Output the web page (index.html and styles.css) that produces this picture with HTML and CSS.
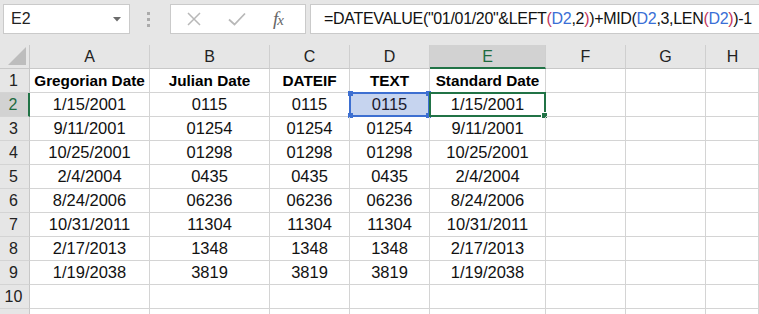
FILE: index.html
```html
<!DOCTYPE html>
<html>
<head>
<meta charset="utf-8">
<link rel="stylesheet" href="styles.css">
</head>
<body>
<div class="app">
  <div class="toolbar">
    <div class="namebox">
      <span class="name">E2</span>
      <svg class="caret" width="8" height="5" viewBox="0 0 8 5"><path d="M0 0h8L4 4.5z" fill="#6b6b6b"/></svg>
    </div>
    <div class="grip"><i></i><i></i><i></i></div>
    <div class="fxbox">
      <svg class="ico" width="16" height="16" viewBox="0 0 16 16"><path d="M2 2l12 12M14 2L2 14" stroke="#b8b8b8" stroke-width="1.5" fill="none"/></svg>
      <svg class="ico" width="20" height="16" viewBox="0 0 20 16"><path d="M2 8.5l5.5 5L18 2.5" stroke="#b8b8b8" stroke-width="1.8" fill="none"/></svg>
      <span class="fx">f<span class="x">x</span></span>
    </div>
    <div class="formula">=DATEVALUE("01/01/20"&amp;LEFT<span class="p">(</span><span class="r">D2</span>,2<span class="p">)</span>)+MID(<span class="r">D2</span>,3,LEN<span class="p">(</span><span class="r">D2</span><span class="p">)</span>)-1</div>
  </div>

  <div class="sheet">
    <div class="corner"><svg class="tri" width="18" height="18" viewBox="0 0 18 18"><path d="M18 0V18H0z" fill="#bdbdbd"/></svg></div>
    <div class="ch">A</div>
    <div class="ch">B</div>
    <div class="ch">C</div>
    <div class="ch">D</div>
    <div class="ch sel">E</div>
    <div class="ch">F</div>
    <div class="ch">G</div>
    <div class="ch last">H</div>

    <div class="rh">1</div>
    <div class="c b">Gregorian Date</div>
    <div class="c b">Julian Date</div>
    <div class="c b">DATEIF</div>
    <div class="c b">TEXT</div>
    <div class="c b">Standard Date</div>
    <div class="c"></div><div class="c"></div><div class="c"></div>

    <div class="rh sel">2</div>
    <div class="c">1/15/2001</div>
    <div class="c">0115</div>
    <div class="c">0115</div>
    <div class="c ref">0115<span class="refbox"><i class="h tl"></i><i class="h tr"></i><i class="h bl"></i><i class="h br"></i></span></div>
    <div class="c act">1/15/2001<span class="actbox"><i class="fill"></i></span></div>
    <div class="c"></div><div class="c"></div><div class="c"></div>

    <div class="rh">3</div>
    <div class="c">9/11/2001</div><div class="c">01254</div><div class="c">01254</div><div class="c">01254</div><div class="c">9/11/2001</div>
    <div class="c"></div><div class="c"></div><div class="c"></div>

    <div class="rh">4</div>
    <div class="c">10/25/2001</div><div class="c">01298</div><div class="c">01298</div><div class="c">01298</div><div class="c">10/25/2001</div>
    <div class="c"></div><div class="c"></div><div class="c"></div>

    <div class="rh">5</div>
    <div class="c">2/4/2004</div><div class="c">0435</div><div class="c">0435</div><div class="c">0435</div><div class="c">2/4/2004</div>
    <div class="c"></div><div class="c"></div><div class="c"></div>

    <div class="rh">6</div>
    <div class="c">8/24/2006</div><div class="c">06236</div><div class="c">06236</div><div class="c">06236</div><div class="c">8/24/2006</div>
    <div class="c"></div><div class="c"></div><div class="c"></div>

    <div class="rh">7</div>
    <div class="c">10/31/2011</div><div class="c">11304</div><div class="c">11304</div><div class="c">11304</div><div class="c">10/31/2011</div>
    <div class="c"></div><div class="c"></div><div class="c"></div>

    <div class="rh">8</div>
    <div class="c">2/17/2013</div><div class="c">1348</div><div class="c">1348</div><div class="c">1348</div><div class="c">2/17/2013</div>
    <div class="c"></div><div class="c"></div><div class="c"></div>

    <div class="rh">9</div>
    <div class="c">1/19/2038</div><div class="c">3819</div><div class="c">3819</div><div class="c">3819</div><div class="c">1/19/2038</div>
    <div class="c"></div><div class="c"></div><div class="c"></div>

    <div class="rh">10</div>
    <div class="c"></div><div class="c"></div><div class="c"></div><div class="c"></div><div class="c"></div>
    <div class="c"></div><div class="c"></div><div class="c"></div>

    <div class="rh"></div>
    <div class="c"></div><div class="c"></div><div class="c"></div><div class="c"></div><div class="c"></div>
    <div class="c"></div><div class="c"></div><div class="c"></div>
  </div>
</div>
</body>
</html>
```
FILE: styles.css
```css
html, body {
  margin: 0;
  padding: 0;
  background: #e6e6e6;
}
body {
  width: 759px;
  height: 314px;
  overflow: hidden;
  font-family: "Liberation Sans", Arial, sans-serif;
  color: #111;
}
.app {
  width: 759px;
  height: 314px;
  overflow: hidden;
}
.toolbar {
  display: flex;
  align-items: flex-start;
  height: 45px;
  padding-top: 4px;
  box-sizing: border-box;
  background: #e6e6e6;
}
.namebox {
  margin-left: 3px;
  width: 127px;
  height: 30px;
  box-sizing: border-box;
  background: #fff;
  border: 1px solid #cacaca;
  display: flex;
  align-items: center;
  justify-content: space-between;
  padding: 0 8px 0 7px;
  font-size: 16px;
  color: #222;
}
.caret {
  display: block;
}
.grip {
  width: 3px;
  margin-left: 17px;
  margin-right: 20px;
  padding-top: 8px;
  display: flex;
  flex-direction: column;
  gap: 3px;
}
.grip i {
  display: block;
  width: 3px;
  height: 3px;
  background: #ababab;
}
.fxbox {
  width: 136px;
  height: 30px;
  box-sizing: border-box;
  background: #fff;
  border: 1px solid #cacaca;
  display: flex;
  align-items: center;
  padding-left: 15px;
}
.fxbox .ico {
  display: block;
}
.fxbox .ico + .ico {
  margin-left: 25px;
}
.fx {
  margin-left: 26px;
  font-family: "Liberation Serif", "Times New Roman", serif;
  font-style: italic;
  font-size: 19px;
  color: #666;
  letter-spacing: -1px;
}
.fx .x {
  font-size: 15px;
}
.formula {
  margin-left: 4px;
  flex: 1;
  height: 30px;
  box-sizing: border-box;
  background: #fff;
  border: 1px solid #cacaca;
  border-right: none;
  padding-left: 13px;
  font-size: 16px;
  letter-spacing: -0.32px;
  line-height: 28px;
  white-space: nowrap;
  overflow: hidden;
  color: #111;
}
.formula .r {
  color: #3a6fd6;
}
.formula .p {
  color: #c2365a;
}
.sheet {
  display: grid;
  grid-template-columns: 30px 120px 120px 80px 80px 116px 80px 80px 53px;
  grid-auto-rows: 24px;
  background: #fff;
}
.corner {
  background: #e6e6e6;
  border-right: 1px solid #c8c8c8;
  border-bottom: 1px solid #c8c8c8;
  position: relative;
}
.tri {
  position: absolute;
  right: 3px;
  bottom: 3px;
}
.ch {
  background: #e6e6e6;
  border-right: 1px solid #cfcfcf;
  border-bottom: 1px solid #c8c8c8;
  display: flex;
  align-items: center;
  justify-content: center;
  font-size: 16px;
  color: #222;
  box-sizing: border-box;
}
.ch.last {
  border-right: none;
}
.ch.sel {
  background: #d2d2d2;
  color: #1e6b3f;
  border-bottom: 2px solid #217346;
  padding-top: 1px;
}
.rh {
  background: #e6e6e6;
  border-right: 1px solid #c8c8c8;
  border-bottom: 1px solid #d4d4d4;
  display: flex;
  align-items: center;
  justify-content: center;
  font-size: 16px;
  color: #222;
  box-sizing: border-box;
  padding-right: 2px;
}
.rh.sel {
  background: #d2d2d2;
  color: #1e6b3f;
  border-right: 2px solid #217346;
}
.c {
  border-right: 1px solid #d4d4d4;
  border-bottom: 1px solid #d4d4d4;
  display: flex;
  align-items: center;
  justify-content: center;
  font-size: 16.5px;
  color: #111;
  box-sizing: border-box;
  white-space: nowrap;
  position: relative;
}
.c.b {
  font-weight: bold;
  font-size: 15.3px;
  color: #000;
}
.c.ref {
  background: #c6d4ef;
  color: #1a1a2e;
}
.refbox {
  position: absolute;
  left: -1px;
  top: -1px;
  right: -1px;
  bottom: -1px;
  border: 2px solid #3d6fd1;
  pointer-events: none;
}
.refbox .h {
  position: absolute;
  width: 5px;
  height: 5px;
  background: #3d6fd1;
}
.refbox .tl { left: -3px; top: -3px; }
.refbox .tr { right: -3px; top: -3px; }
.refbox .bl { left: -3px; bottom: -3px; }
.refbox .br { right: -3px; bottom: -3px; }
.actbox {
  position: absolute;
  left: -1px;
  top: -1px;
  right: -1px;
  bottom: -1px;
  border: 2px solid #217346;
  pointer-events: none;
}
.actbox .fill {
  position: absolute;
  right: -4px;
  bottom: -4px;
  width: 5px;
  height: 5px;
  background: #217346;
  border: 1px solid #fff;
}
```
